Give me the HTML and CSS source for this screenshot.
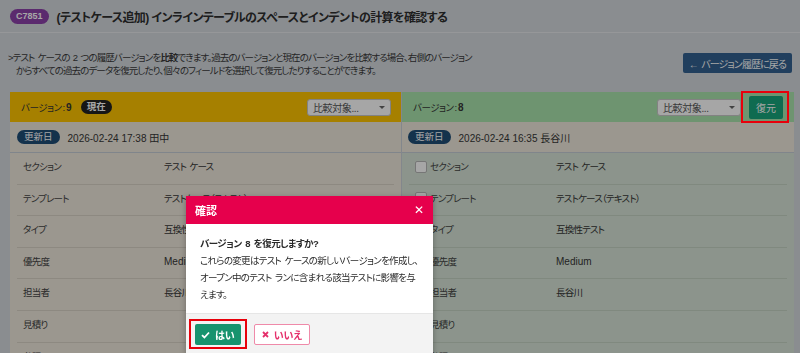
FILE: index.html
```html
<!DOCTYPE html>
<html lang="ja">
<head>
    <meta charset="UTF-8">
    <meta name="viewport" content="width=device-width, initial-scale=1.0">
    <title>バージョン比較</title>
    <link rel="stylesheet" href="styles.css">
</head>
<body>
    <header class="titleBar">
        <span class="caseId">C7851</span>
        <h1>(テストケース追加) インラインテーブルのスペースとインデントの計算を確認する</h1>
    </header>

    <div class="intro">
        <p class="introText">&gt;テスト ケースの 2 つの履歴バージョンを<b>比較</b>できます。過去のバージョンと現在のバージョンを比較する場合、右側のバージョン<br>からすべての過去のデータを復元したり、個々のフィールドを選択して復元したりすることができます。</p>
        <button class="backButton">&#8592; バージョン履歴に戻る</button>
    </div>

    <div class="compare">
        <section class="version current">
            <div class="versionHead">
                <span class="versionName">バージョン<i>:</i><b>9</b></span>
                <span class="nowBadge">現在</span>
                <div class="compareSelect">比較対象...<span class="caret"></span></div>
            </div>
            <div class="updated">
                <span class="updatedBadge">更新日</span>
                <span class="stamp">2026-02-24 17:38 田中</span>
            </div>
            <div class="fields">
                <div class="field"><span class="label">セクション</span><span>テスト ケース</span></div>
                <div class="field"><span class="label">テンプレート</span><span>テストケース（テキスト）</span></div>
                <div class="field"><span class="label">タイプ</span><span>互換性テスト</span></div>
                <div class="field"><span class="label">優先度</span><span class="latin">Medium</span></div>
                <div class="field"><span class="label">担当者</span><span>長谷川</span></div>
                <div class="field"><span class="label">見積り</span><span></span></div>
                <div class="field"><span class="label">参照</span><span></span></div>
            </div>
        </section>

        <section class="version older">
            <div class="versionHead">
                <span class="versionName">バージョン<i>:</i><b>8</b></span>
                <div class="compareSelect">比較対象...<span class="caret"></span></div>
                <span class="marked"><button class="restoreButton">復元</button></span>
            </div>
            <div class="updated">
                <span class="updatedBadge">更新日</span>
                <span class="stamp">2026-02-24 16:35 長谷川</span>
            </div>
            <div class="fields">
                <div class="field"><span class="label"><span class="check"></span>セクション</span><span>テスト ケース</span></div>
                <div class="field"><span class="label"><span class="check"></span>テンプレート</span><span>テストケース（テキスト）</span></div>
                <div class="field"><span class="label"><span class="check"></span>タイプ</span><span>互換性テスト</span></div>
                <div class="field"><span class="label"><span class="check"></span>優先度</span><span class="latin">Medium</span></div>
                <div class="field"><span class="label"><span class="check"></span>担当者</span><span>長谷川</span></div>
                <div class="field"><span class="label"><span class="check"></span>見積り</span><span></span></div>
                <div class="field"><span class="label"><span class="check"></span>参照</span><span></span></div>
            </div>
        </section>
    </div>

    <div class="backdrop"></div>

    <div class="modal">
        <div class="modalHead">
            <span>確認</span>
            <span class="closeX">&#10005;</span>
        </div>
        <div class="modalBody">
            <p><b>バージョン 8 を復元しますか?</b><br>これらの変更はテスト ケースの新しいバージョンを作成し、<br>オープン中のテスト ランに含まれる該当テストに影響を与<br>えます。</p>
        </div>
        <div class="modalFoot">
            <span class="marked">
                <button class="yesButton">
                    <svg width="9" height="8" viewBox="0 0 9 8"><path d="M1 4.2 L3.4 6.5 L8 1.5" fill="none" stroke="#fff" stroke-width="1.8"/></svg>
                    はい
                </button>
            </span>
            <button class="noButton">
                <svg width="7" height="7" viewBox="0 0 7 7"><path d="M1 1 L6 6 M6 1 L1 6" stroke="#e5306b" stroke-width="1.8"/></svg>
                いいえ
            </button>
        </div>
    </div>
</body>
</html>
```

FILE: styles.css
```css
body {
    font-family: "Liberation Sans", "Noto Sans CJK JP", sans-serif;
    font-feature-settings: "palt";
    font-size: 9.5px;
    letter-spacing: -0.8px;
    word-spacing: 1.5px;
    color: #363636;
    background: #d4d9de;
    margin: 0;
}

.titleBar {
    display: flex;
    align-items: center;
    gap: 8px;
    height: 32px;
    padding: 0 10px;
    border-bottom: 1px solid #e6e9ec;
}

.caseId {
    background: #8d41a9;
    color: #fff;
    font-weight: bold;
    font-size: 9px;
    letter-spacing: 0;
    padding: 2px 6px;
    border-radius: 8px;
    line-height: 11px;
}

.titleBar h1 {
    margin: 0;
    font-size: 12px;
    letter-spacing: -0.6px;
    word-spacing: 0;
    color: #2e2e2e;
}

.intro {
    display: flex;
    justify-content: space-between;
    align-items: flex-start;
    padding: 18px 8px 0 8px;
    height: 41px;
}

.introText {
    margin: 0;
    line-height: 13px;
    padding-left: 8px;
    text-indent: -8px;
    letter-spacing: -0.9px;
    color: #3a3a3a;
}

.backButton {
    margin-top: 2px;
    height: 20px;
    padding: 0 6px;
    background: #336291;
    color: #fff;
    border: none;
    border-radius: 2px;
    font-family: inherit;
    font-feature-settings: "palt";
    font-size: 10px;
    letter-spacing: -0.9px;
    word-spacing: 1.5px;
}

.compare {
    display: grid;
    grid-template-columns: 1fr 1fr;
    margin: 0 6px 0 10px;
}

.version.current {
    background: #eee8dc;
    border-right: 1px solid #c9d0d8;
}

.version.older {
    background: #d7e4d7;
}

.versionHead {
    display: flex;
    align-items: center;
    gap: 9px;
    height: 30px;
    padding: 0 10px 0 11px;
}

.current .versionHead {
    background: #ffc500;
}

.older .versionHead {
    background: #a9e4ac;
    padding-right: 11px;
    gap: 6px;
}

.versionName {
    letter-spacing: -0.5px;
}

.versionName i {
    font-style: normal;
    letter-spacing: 0;
    margin: 0 1px;
}

.versionName b {
    font-size: 10px;
    letter-spacing: 0;
}

.nowBadge {
    background: #222;
    color: #fff;
    font-weight: bold;
    padding: 1px 6px;
    border-radius: 7px;
    line-height: 12px;
    letter-spacing: 0;
}

.compareSelect {
    margin-left: auto;
    width: 72px;
    height: 15px;
    padding: 0 5px;
    background: #fff;
    border: 1px solid #c8c8c8;
    border-radius: 3px;
    color: #555;
    font-size: 10px;
    letter-spacing: -0.4px;
    display: flex;
    align-items: center;
    justify-content: space-between;
}

.caret {
    border-left: 3px solid transparent;
    border-right: 3px solid transparent;
    border-top: 3px solid #666;
}

.restoreButton {
    width: 34px;
    height: 23px;
    margin-left: 2px;
    background: #17a57b;
    color: #fff;
    border: none;
    border-radius: 2px;
    font-family: inherit;
    font-size: 10px;
    padding: 0;
}

.marked {
    position: relative;
    display: inline-flex;
}

.marked::after {
    content: '';
    position: absolute;
    top: -5px;
    left: -6px;
    right: -6px;
    bottom: -4px;
    border: 2px solid #e8000b;
    z-index: 30;
}

.updated {
    display: flex;
    align-items: center;
    gap: 8px;
    height: 30px;
    padding: 0 7px;
    background: #eee8dc;
    border-bottom: 1px solid #c5cdd6;
}

.older .updated {
    padding-left: 6px;
}

.updatedBadge {
    background: #1f4d76;
    color: #fff;
    padding: 1px 7px;
    border-radius: 7px;
    line-height: 12px;
    letter-spacing: 0;
}

.stamp, .latin {
    font-size: 10px;
    letter-spacing: 0;
    word-spacing: 0;
}

.fields {
    padding: 0 7px;
}

.field {
    display: grid;
    grid-template-columns: 141px 1fr;
    padding: 6px 6px 9.6px 6px;
    line-height: 15px;
    border-bottom: 1px solid #d9d3c6;
}

.older .field {
    border-bottom-color: #c5d3c4;
}

.label {
    display: flex;
    align-items: center;
    gap: 3px;
    color: #444;
}

.check {
    width: 10px;
    height: 10px;
    background: #fff;
    border: 1px solid #b5b5b5;
    border-radius: 2px;
}

.backdrop {
    position: fixed;
    inset: 0;
    background: rgba(0, 0, 0, 0.35);
    z-index: 10;
}

.modal {
    position: fixed;
    left: 186px;
    top: 196px;
    width: 247px;
    background: #fff;
    z-index: 20;
    box-shadow: 0 2px 6px rgba(0, 0, 0, 0.3);
}

.modalHead {
    display: flex;
    align-items: center;
    justify-content: space-between;
    height: 28px;
    padding: 0 9px;
    background: #e6004c;
    color: #fff;
    font-weight: bold;
    font-size: 11px;
    letter-spacing: 0;
}

.closeX {
    font-weight: normal;
    font-size: 12px;
}

.modalBody {
    padding: 11px 14px 10px;
}

.modalBody p {
    margin: 0;
    line-height: 17px;
    white-space: nowrap;
    letter-spacing: -0.7px;
    color: #2a2a2a;
}

.modalBody b {
    letter-spacing: -0.5px;
}

.modalFoot {
    display: flex;
    align-items: center;
    gap: 13px;
    padding: 10px 9px 8px;
    background: #f3f3f3;
    border-top: 1px solid #e6e6e6;
}

.yesButton, .noButton {
    display: flex;
    align-items: center;
    gap: 5px;
    height: 21px;
    padding: 0 7px;
    border-radius: 2px;
    white-space: nowrap;
    font-family: inherit;
    font-feature-settings: "palt";
    font-size: 10px;
    font-weight: bold;
}

.yesButton {
    padding: 0 6px;
    background: #17936e;
    color: #fff;
    border: none;
}

.noButton {
    background: #fff;
    color: #e5306b;
    border: 1px solid #ef8aa9;
}
```
